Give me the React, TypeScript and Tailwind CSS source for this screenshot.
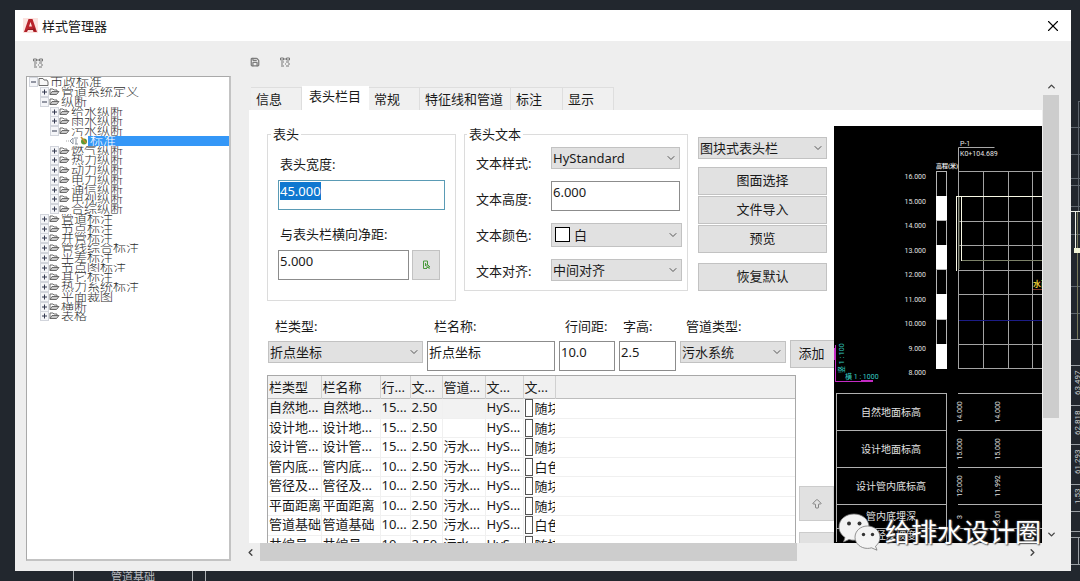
import React, { useEffect, useRef } from 'react';
import { ArrowBigUp, ChevronDown, ChevronLeft, ChevronRight, ChevronUp, Save, X } from 'lucide-react';
import clsx from 'clsx';

interface TreeNode {
  label: string;
  level: number;
  open?: boolean;
  selected?: boolean;
}

const treeNodes: TreeNode[] = [
  { label: '市政标准', level: 0, open: true },
  { label: '管道系统定义', level: 1 },
  { label: '纵断', level: 1, open: true },
  { label: '给水纵断', level: 2 },
  { label: '雨水纵断', level: 2 },
  { label: '污水纵断', level: 2, open: true },
  { label: '标准', level: 3, selected: true },
  { label: '燃气纵断', level: 2 },
  { label: '热力纵断', level: 2 },
  { label: '动力纵断', level: 2 },
  { label: '电力纵断', level: 2 },
  { label: '通信纵断', level: 2 },
  { label: '电视纵断', level: 2 },
  { label: '合综纵断', level: 2 },
  { label: '管道标注', level: 1 },
  { label: '节点标注', level: 1 },
  { label: '井管标注', level: 1 },
  { label: '管线综合标注', level: 1 },
  { label: '平差标注', level: 1 },
  { label: '节点图标注', level: 1 },
  { label: '其它标注', level: 1 },
  { label: '热力系统标注', level: 1 },
  { label: '平面裁图', level: 1 },
  { label: '横断', level: 1 },
  { label: '表格', level: 1 },
];

const levelPadding = ['pl-[2px]', 'pl-[13px]', 'pl-[23px]', 'pl-[39px]'];

const tabs = [
  { label: '信息', width: 'w-[51px]' },
  { label: '表头栏目', width: 'w-[67px]', active: true },
  { label: '常规', width: 'w-[51px]' },
  { label: '特征线和管道', width: 'w-[91px]' },
  { label: '标注', width: 'w-[52px]' },
  { label: '显示', width: 'w-[51px]' },
];

const columns = ['栏类型', '栏名称', '行...', '文...', '管道...', '文...', '文...'];

const rows = [
  ['自然地...', '自然地...', '15...', '2.50', '', 'HyS...', '随块'],
  ['设计地...', '设计地...', '15...', '2.50', '', 'HyS...', '随块'],
  ['设计管...', '设计管...', '15...', '2.50', '污水...', 'HyS...', '随块'],
  ['管内底...', '管内底...', '10...', '2.50', '污水...', 'HyS...', '白色'],
  ['管径及...', '管径及...', '10...', '2.50', '污水...', 'HyS...', '随块'],
  ['平面距离', '平面距离', '10...', '2.50', '污水...', 'HyS...', '随块'],
  ['管道基础', '管道基础', '10...', '2.50', '污水...', 'HyS...', '白色'],
  ['井编号', '井编号', '10...', '2.50', '污水...', 'HyS...', '随块'],
];

const inputClass =
  'block h-[30px] rounded-none border border-[#8c8c8c] bg-white px-px pb-[9px] leading-5 outline-none';
const buttonClass = 'h-7 border border-[#c2c2c2] bg-[#e1e1e1] text-center whitespace-nowrap';

interface SelectProps {
  id?: string;
  label?: string;
  value: string;
  className?: string;
  swatch?: boolean;
}

function Select({ id, label, value, className, swatch }: SelectProps) {
  return (
    <div className={clsx('relative', className)}>
      <select
        id={id}
        aria-label={label}
        defaultValue={value}
        className={clsx(
          'block h-full w-full appearance-none rounded-none border border-[#c2c2c2] bg-[#e1e1e1] pr-4 leading-5 outline-none',
          swatch ? 'pl-[22px]' : 'pl-px',
        )}
      >
        <option>{value}</option>
      </select>
      {swatch && <span className="absolute top-1 left-1 size-[15px] border border-black bg-white" />}
      <ChevronDown className="pointer-events-none absolute top-1/2 right-[3px] size-3 -translate-y-1/2 text-[#555]" strokeWidth={2} />
    </div>
  );
}

function FolderIcon({ open }: { open?: boolean }) {
  return (
    <svg viewBox="0 0 11 10" className="h-[10px] w-[11px] shrink-0" fill="none" stroke="#5c5c5c" strokeWidth="0.9">
      {open ? (
        <path d="M1 8.5V1.5h4l1 1.5h3l1 2v3.5z" fill="#f7f7f7" />
      ) : (
        <>
          <path d="M1 7.5V2h3l1 1h3v1.5" />
          <path d="M1 7.5l2-3h7l-2.5 3z" fill="#c9c9c9" />
        </>
      )}
    </svg>
  );
}

function Expander({ open }: { open?: boolean }) {
  return (
    <button aria-label={open ? '折叠' : '展开'} className="h-[10px] w-[9px] shrink-0">
      <svg viewBox="0 0 9 10" className="block h-[10px] w-[9px]">
        <rect x="0.5" y="0.5" width="8" height="9" fill="#f4f5f8" stroke="#d2d5dc" strokeWidth="1" />
        <path d={open ? 'M2 5h5' : 'M2 5h5M4.5 2.5v5'} stroke="#33384f" strokeWidth="1" />
      </svg>
    </button>
  );
}

function StyleTree() {
  return (
    <ul className="min-h-0 flex-1 overflow-hidden border border-r-2 border-b-2 border-[#c3c3c3] border-t-[#a9a9a9] border-l-[#a9a9a9] bg-white text-[#2e2e2e]">
      {treeNodes.map((node) => (
        <li
          key={node.label + node.level}
          className={clsx('flex h-[10px] items-start overflow-hidden nth-[4n]:h-[9px]', levelPadding[node.level])}
        >
          {node.selected ? (
            <svg viewBox="0 0 22 10" className="h-[10px] w-[22px] shrink-0" fill="none">
              <path d="M0 5h4" stroke="#aaa" strokeDasharray="1 1" />
              <path d="M4 5l3-3v6zM8 2h4M9 8h3M10 3v5" stroke="#8d97a5" />
              <circle cx="18" cy="5.5" r="3" fill="#5c9a35" />
              <path d="M15 1l5 6" stroke="#c78a2b" strokeWidth="1.5" />
            </svg>
          ) : (
            <>
              <Expander open={node.open} />
              <FolderIcon open={node.level === 0} />
            </>
          )}
          <span
            className={clsx(
              'self-stretch whitespace-nowrap leading-[8px] font-light',
              node.selected ? 'flex-1 bg-[#3497f7] pl-[2px] text-white' : 'pl-px',
            )}
          >
            {node.label}
          </span>
        </li>
      ))}
    </ul>
  );
}

function ToolbarTree() {
  return (
    <svg viewBox="0 0 10 10" className="size-[10px]" fill="none" stroke="#777" strokeWidth="1">
      <path d="M0.5 1h3v2h-3zM6.5 1h3v2h-3zM3.5 2h3" />
      <path d="M1 5h3M6 5h3M1 7h2M5 7h1M8 7h2M1 9h3M6 9h3" />
    </svg>
  );
}

function HeaderGroup() {
  const widthRef = useRef<HTMLInputElement>(null);

  useEffect(() => {
    widthRef.current?.focus();
    widthRef.current?.select();
  }, []);

  return (
    <fieldset className="w-[189px] shrink-0 border border-[#dcdcdc] px-[10px] pt-3 pb-5">
      <legend className="-ml-[7px] px-[2px] leading-4">表头</legend>
      <label htmlFor="header-width" className="block pl-[2px] leading-5">表头宽度:</label>
      <input
        id="header-width"
        ref={widthRef}
        defaultValue="45.000"
        className="mt-[6px] block h-[30px] w-full border border-[#5a9bb5] bg-white px-px pb-[9px] leading-5 outline-none selection:bg-[#0f78d0] selection:text-white"
      />
      <label htmlFor="header-gap" className="mt-[14px] block pl-[2px] leading-5">与表头栏横向净距:</label>
      <div className="mt-[6px] flex gap-[3px]">
        <input id="header-gap" defaultValue="5.000" className={clsx(inputClass, 'w-[131px]')} />
        <button aria-label="拾取" className="flex w-7 items-center justify-center border border-[#c2c2c2] bg-[#e1e1e1]">
          <svg viewBox="0 0 9 10" className="h-[10px] w-[9px]" fill="none" stroke="#4b9a3c" strokeWidth="1">
            <path d="M5 8.5H1.500V1h4v3M3.500 3v3" />
            <path d="M5 4v4l1-1 1.500 2M5 4l3 3H6" />
          </svg>
        </button>
      </div>
    </fieldset>
  );
}

function HeaderTextGroup() {
  return (
    <fieldset className="w-[224px] min-w-0 shrink-0 self-start border border-[#dcdcdc] pr-[5px] pb-[9px] pl-[11px]">
      <legend className="-ml-[9px] px-[2px] leading-4">表头文本</legend>
      <div className="flex">
        <div className="flex w-[75px] shrink-0 flex-col gap-4 pt-[11px] leading-5">
          <label htmlFor="text-style">文本样式:</label>
          <label htmlFor="text-height">文本高度:</label>
          <label htmlFor="text-color">文本颜色:</label>
          <label htmlFor="text-align">文本对齐:</label>
        </div>
        <div className="flex w-[131px] shrink-0 flex-col gap-3 pt-[5px]">
          <Select id="text-style" value="HyStandard" className="w-[129px] h-[22px]" />
          <input id="text-height" defaultValue="6.000" className={clsx(inputClass, 'w-[129px]')} />
          <Select id="text-color" value="白" swatch className="h-6" />
          <Select id="text-align" value="中间对齐" className="h-[22px]" />
        </div>
      </div>
    </fieldset>
  );
}

function ColumnEditor() {
  return (
    <div className="mt-[15px] ml-[19px] flex items-start gap-1">
      <div className="w-[155px] shrink-0">
        <label htmlFor="col-type" className="block pl-[7px] leading-5">栏类型:</label>
        <Select id="col-type" value="折点坐标" className="mt-[5px] h-[22px]" />
      </div>
      <div className="w-32 shrink-0">
        <label htmlFor="col-name" className="block pl-[7px] leading-5">栏名称:</label>
        <input id="col-name" defaultValue="折点坐标" className={clsx(inputClass, 'mt-[5px] w-full')} />
      </div>
      <div className="w-14 shrink-0">
        <label htmlFor="row-gap" className="block pl-[6px] leading-5">行间距:</label>
        <input id="row-gap" defaultValue="10.0" className={clsx(inputClass, 'mt-[5px] w-full')} />
      </div>
      <div className="w-[57px] shrink-0">
        <label htmlFor="char-height" className="block pl-1 leading-5">字高:</label>
        <input id="char-height" defaultValue="2.5" className={clsx(inputClass, 'mt-[5px] w-full')} />
      </div>
      <div className="w-[106px] shrink-0">
        <label htmlFor="pipe-type" className="block pl-[6px] leading-5">管道类型:</label>
        <Select id="pipe-type" value="污水系统" className="mt-[5px] h-[22px]" />
      </div>
      <button className={clsx(buttonClass, 'mt-6 w-[55px] shrink-0 pr-3')}>添加</button>
    </div>
  );
}

function ColumnTable() {
  return (
    <div className="w-[529px] shrink-0 border border-[#a8a8a8] bg-white">
      <table className="w-full table-fixed border-collapse text-left">
        <colgroup>
          <col className="w-[53px]" />
          <col className="w-[59px]" />
          <col className="w-[30px]" />
          <col className="w-8" />
          <col className="w-[43px]" />
          <col className="w-[38px]" />
          <col className="w-8" />
          <col />
        </colgroup>
        <thead>
          <tr className="h-[22px] border-b border-[#bdbdbd] bg-[#f0f0f0]">
            {columns.map((column, i) => (
              <th key={i} className="overflow-hidden border-r border-[#d0d0d0] p-0 pl-px leading-5 font-normal whitespace-nowrap">
                {column}
              </th>
            ))}
            <th aria-label="空白" />
          </tr>
        </thead>
        <tbody>
          {rows.map((row, i) => (
            <tr key={i} className="group h-5 border-b border-[#f0f0f0] even:h-[19px]">
              {row.slice(0, 6).map((cell, j) => (
                <td key={j} className="overflow-hidden border-r border-[#f0f0f0] p-0 pl-px align-top leading-4 whitespace-nowrap group-first:bg-[#f2f2f2]">
                  {cell}
                </td>
              ))}
              <td className="overflow-hidden p-0 align-top leading-[18px] whitespace-nowrap">
                <div className="flex gap-[2px] pl-px">
                  <span className="h-[18px] w-2 shrink-0 border border-[#555] bg-white" />
                  <span>{row[6]}</span>
                </div>
              </td>
              <td />
            </tr>
          ))}
        </tbody>
      </table>
    </div>
  );
}

const elevations = ['16.000', '15.000', '14.000', '13.000', '12.000', '11.000', '10.000', '9.000', '8.000'];

function ProfilePreview() {
  return (
    <div className="mt-4 min-w-0 flex-1 overflow-hidden bg-black">
      <svg
        width="208"
        height="416"
        viewBox="0 0 208 416"
        className="block font-['Liberation_Sans_Narrow',Roboto,'Noto_Sans_CJK_SC',sans-serif]"
        fontSize="7"
        fill="#e2e2e2"
      >
        <text x="126" y="20">P-1</text>
        <path d="M124.500 45V21.500h36" fill="none" stroke="#a8a8a8" />
        <text x="126" y="30">K0+104.689</text>
        <text x="102" y="42" fontSize="6" fontWeight="700">高程(米)</text>

        {elevations.map((value, i) => (
          <text key={value} x="92" y={53 + i * 24.5} textAnchor="end">{value}</text>
        ))}

        <rect x="102.500" y="45.500" width="10" height="197" fill="#000" stroke="#b5b5b5" />
        {[70, 119, 168, 218].map((y) => (
          <rect key={y} x="102" y={y} width="11" height="25" fill="#fff" />
        ))}
        <path d="M102 94.500h11M102 143.500h11M102 193.500h11" stroke="#b5b5b5" />

        <g stroke="#a3a3a3" fill="none">
          <path d="M124.500 45v198M149.500 45v198M174.500 45v198M198.500 45v198" />
          <path d="M124 45.500h84M124 95.500h84M124 119.500h84M124 144.500h84M124 168.500h84M124 218.500h84M124 242.500h84" />
        </g>
        <path d="M125 194.500h84" stroke="#1c1c86" />
        <path d="M123 70.500h85M122.500 70v75M127.500 71v64" stroke="#f7f7e4" fill="none" />
        <path d="M125 71v72M128 134.500h80" stroke="#7c8268" fill="none" />
        <text x="199" y="161" fontSize="8" fontWeight="700" fill="#e3c534">水面</text>
        <path d="M199 163.500h9" stroke="#7a3a2a" />

        <g stroke="#c32bc3" fill="none">
          <path d="M1.500 219v36M1 255.500h38" />
          <path d="M0 222v12" strokeWidth="4" />
          <path d="M27 255h12" strokeWidth="2" />
        </g>
        <g fill="#35cfc4">
          <text x="10" y="247" transform="rotate(-90 10 247)">竖 1 : 100</text>
          <text x="11" y="253">横 1 : 1000</text>
        </g>

        <g stroke="#b0b0b0" fill="none">
          <path d="M2.500 267v149M112.500 267v149" />
          <path d="M2 267.500h111M2 304.500h111M2 341.500h111M2 378.500h111M2 402.500h111" />
          <path d="M124 267.500h84M124 304.500h84M124 341.500h84M124 378.500h84M124 402.500h84" />
        </g>
        <g fontSize="10" textAnchor="middle">
          <text x="57" y="290">自然地面标高</text>
          <text x="57" y="327">设计地面标高</text>
          <text x="57" y="364">设计管内底标高</text>
          <text x="57" y="394">管内底埋深</text>
          <text x="57" y="413">管径及坡度</text>
        </g>
        <g textAnchor="middle">
          <text x="128" y="286" transform="rotate(-90 128 286)">14.000</text>
          <text x="166" y="286" transform="rotate(-90 166 286)">14.000</text>
          <text x="128" y="323" transform="rotate(-90 128 323)">15.000</text>
          <text x="166" y="323" transform="rotate(-90 166 323)">15.000</text>
          <text x="128" y="360" transform="rotate(-90 128 360)">12.000</text>
          <text x="166" y="360" transform="rotate(-90 166 360)">11.992</text>
          <text x="128" y="391" transform="rotate(-90 128 391)">3</text>
          <text x="166" y="391" transform="rotate(-90 166 391)">3.01</text>
        </g>
      </svg>
    </div>
  );
}

/* drawing area that shows round the dialog */
function CanvasBackdrop() {
  return (
    <>
      <svg width="260" height="10" viewBox="0 0 260 10" className="absolute bottom-0 left-0" fontSize="11" fill="#b9bcc0">
        <path d="M73.500 0v10M192.500 0v10M205.500 0v10" stroke="#aeb2b6" />
        <text x="111" y="10">管道基础</text>
      </svg>
      <svg
        width="9"
        height="581"
        viewBox="0 0 9 581"
        className="absolute top-0 right-0 font-['Liberation_Sans_Narrow',Roboto,sans-serif]"
        fontSize="8"
        fill="#c8cbce"
      >
        <g stroke="#5f666e" fill="none">
          <path d="M7.500 101v111M7 101.500h2M0 127.500h9M0 154.500h9M0 178.500h9M0 185.500h9M0 206.500h9M0 234.500h9M0 286.500h9M0 313.500h9" />
        </g>
        <path d="M0 339.500h9M0 365.500h9M0 405.500h9M0 444.500h9M0 484.500h9M0 511.500h9M0 531.500h9M0 537.500h9M7.500 537v27M0 564.500h9" stroke="#9a9fa4" fill="none" />
        <path d="M0 211.500h9M4.500 212v38" stroke="#eceee6" fill="none" />
        <path d="M6.500 212v127" stroke="#77785a" />
        <path d="M3 248h6v5H3z" fill="#f1f4d8" />
        <text x="9" y="395" transform="rotate(-90 9 395)">63.497</text>
        <text x="9" y="435" transform="rotate(-90 9 435)">62.818</text>
        <text x="9" y="474" transform="rotate(-90 9 474)">61.293</text>
        <text x="9" y="504" transform="rotate(-90 9 504)">1.53</text>
      </svg>
    </>
  );
}

function Watermark() {
  return (
    <div className="pointer-events-none absolute right-[39px] bottom-[30px] flex items-center gap-[3px]">
      <svg viewBox="0 0 44 38" className="h-[38px] w-11" fill="#f3f3f3" stroke="#777" strokeWidth="0.8">
        <path d="M16 1C7.500 1 1 6.500 1 14c0 4.500 2.500 8 6 10.500L5.500 29l5.500-2.500c1.500.5 3 .7 5 .7C24.500 27 31 21.500 31 14S24.500 1 16 1z" />
        <path d="M29.500 13C22.500 13 17 18 17 24.200s5.500 11.200 12.500 11.200c1.400 0 2.700-.2 4-.6l5.500 2.400-1.500-4c2.800-2 4.500-5.200 4.500-9C42 18 36.500 13 29.500 13z" />
        <g fill="#333" stroke="none">
          <circle cx="11" cy="10.500" r="2" />
          <circle cx="21.500" cy="10.500" r="2" />
          <circle cx="25.500" cy="21.500" r="1.700" />
          <circle cx="34.500" cy="21.500" r="1.700" />
        </g>
      </svg>
      <span className="text-[26px] leading-8 whitespace-nowrap text-white [text-shadow:1px_1px_1px_#555,0_0_2px_#777]">给排水设计圈</span>
    </div>
  );
}

export default function App() {
  return (
    <div className="relative flex h-screen flex-col overflow-hidden bg-[#22272e] pt-[10px] pr-[9px] pb-[10px] pl-[15px] font-['Noto_Sans','Noto_Sans_CJK_SC',sans-serif] text-[13px] text-[#1a1a1a]">
      <CanvasBackdrop />

      <main className="relative flex min-h-0 flex-1 flex-col bg-[#eee]">
        <header className="flex h-[31px] shrink-0 items-center bg-white pr-[9px] pl-2">
          <span className="flex size-[15px] items-center justify-center bg-[#fbe3e0]">
            <svg viewBox="0 0 15 15" className="size-[15px]">
              <path d="M1 14L5.500 1h4L14 14h-3.500l-1-3H5.300L4 14zM6 8.500h3L7.500 4z" fill="#b9242c" fillRule="evenodd" />
              <path d="M1 14l4-3h5l1-2 2 5-3-2H5z" fill="#8f1820" />
            </svg>
          </span>
          <h1 className="ml-1 flex-1 leading-5">样式管理器</h1>
          <button aria-label="关闭">
            <X className="size-[18px] text-black" strokeWidth={1.5} />
          </button>
        </header>

        <div className="flex min-h-0 flex-1 gap-[18px] pr-[11px] pb-[10px] pl-[11px]">
          <div className="flex w-[205px] shrink-0 flex-col">
            <div className="flex h-[35px] shrink-0 items-center pt-2 pl-[7px]">
              <button aria-label="样式树"><ToolbarTree /></button>
            </div>
            <StyleTree />
          </div>

          <div className="flex min-w-0 flex-1 flex-col">
            <div className="flex h-9 shrink-0 items-center gap-5 pt-[6px] pl-px">
              <button aria-label="保存"><Save className="size-[10px] text-[#7c7c7c]" strokeWidth={3} /></button>
              <button aria-label="列表"><ToolbarTree /></button>
            </div>

            <div className="flex min-h-0 flex-1">
              <div className="flex min-w-0 flex-1 flex-col">
                <div role="tablist" className="flex shrink-0 items-end pt-[9px] pl-[2px]">
                  {tabs.map((tab) => (
                    <button
                      key={tab.label}
                      role="tab"
                      aria-selected={!!tab.active}
                      className={clsx(
                        'shrink-0 text-left leading-5 whitespace-nowrap',
                        tab.width,
                        tab.active ? 'h-6 bg-white pb-1 pl-[7px]' : 'h-[23px] border-t border-r border-[#dedede] bg-[#f0f0f0] pl-[5px]',
                      )}
                    >
                      {tab.label}
                    </button>
                  ))}
                </div>

                <div className="flex min-h-0 flex-1 overflow-hidden bg-white">
                  <section className="w-[585px] shrink-0 overflow-hidden pt-4">
                    <div className="ml-[18px] flex items-start">
                      <HeaderGroup />
                      <div className="ml-2 flex gap-[10px]">
                        <HeaderTextGroup />
                        <div className="flex w-[129px] shrink-0 flex-col pt-[11px]">
                          <Select label="表头栏样式" value="图块式表头栏" className="h-[22px]" />
                          <div className="mt-2 flex flex-col gap-px">
                            <button className={buttonClass}>图面选择</button>
                            <button className={buttonClass}>文件导入</button>
                            <button className={buttonClass}>预览</button>
                          </div>
                          <button className={clsx(buttonClass, 'mt-[10px]')}>恢复默认</button>
                        </div>
                      </div>
                    </div>

                    <ColumnEditor />

                    <div className="mt-1 ml-[18px] flex items-start gap-[3px]">
                      <ColumnTable />
                      <div className="flex flex-1 flex-col gap-[11px] pt-[111px]">
                        <button aria-label="上移" className="flex h-[35px] items-center justify-center border border-[#ccc] bg-[#e1e1e1]">
                          <ArrowBigUp className="size-3 text-[#666]" strokeWidth={1.5} />
                        </button>
                        <button aria-label="下移" className="h-[35px] border border-[#ccc] bg-[#e1e1e1]" />
                      </div>
                    </div>
                  </section>

                  <ProfilePreview />
                </div>
              </div>

              <div className="flex w-[18px] shrink-0 flex-col items-center">
                <button aria-label="向上滚动" className="flex h-[18px] items-center">
                  <ChevronUp className="size-[11px] text-[#444]" strokeWidth={3} />
                </button>
                <div className="flex w-full flex-1 flex-col px-px">
                  <div className="h-[75%] bg-[#cdcdcd]" />
                </div>
                <button aria-label="向下滚动" className="flex h-[18px] items-center">
                  <ChevronDown className="size-[11px] text-[#444]" strokeWidth={3} />
                </button>
              </div>
            </div>

            <div className="flex h-[18px] shrink-0 items-center pr-[22px]">
              <button aria-label="向左滚动" className="w-[11px] shrink-0">
                <ChevronLeft className="-ml-1 size-[11px] text-[#444]" strokeWidth={3} />
              </button>
              <div className="flex h-full flex-1">
                <div className="w-[70%] bg-[#cdcdcd]" />
              </div>
              <button aria-label="向右滚动" className="shrink-0">
                <ChevronRight className="size-[11px] text-[#444]" strokeWidth={3} />
              </button>
            </div>
          </div>
        </div>
      </main>

      <Watermark />
    </div>
  );
}
